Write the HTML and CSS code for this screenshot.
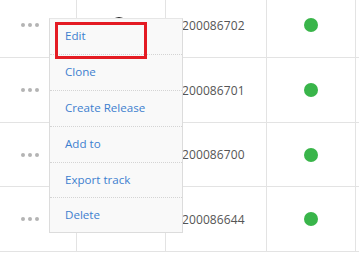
FILE: index.html
```html
<!DOCTYPE html>
<html>
<head>
<meta charset="utf-8">
<link rel="stylesheet" href="styles.css">
</head>
<body>
<div class="page">
  <div class="table">
    <div class="row">
      <div class="cell c-act"><span class="dots"><i></i><i></i><i></i></span></div>
      <div class="cell c-img"><span class="avatar"></span></div>
      <div class="cell c-num">200086702</div>
      <div class="cell c-stat"><span class="dot"></span></div>
      <div class="cell c-rest"></div>
    </div>
    <div class="row">
      <div class="cell c-act"><span class="dots"><i></i><i></i><i></i></span></div>
      <div class="cell c-img"></div>
      <div class="cell c-num">200086701</div>
      <div class="cell c-stat"><span class="dot"></span></div>
      <div class="cell c-rest"></div>
    </div>
    <div class="row">
      <div class="cell c-act"><span class="dots"><i></i><i></i><i></i></span></div>
      <div class="cell c-img"></div>
      <div class="cell c-num">200086700</div>
      <div class="cell c-stat"><span class="dot"></span></div>
      <div class="cell c-rest"></div>
    </div>
    <div class="row">
      <div class="cell c-act"><span class="dots"><i></i><i></i><i></i></span></div>
      <div class="cell c-img"></div>
      <div class="cell c-num">200086644</div>
      <div class="cell c-stat"><span class="dot"></span></div>
      <div class="cell c-rest"></div>
    </div>
  </div>
  <ul class="menu">
    <li class="item highlighted">Edit</li>
    <li class="item">Clone</li>
    <li class="item">Create Release</li>
    <li class="item">Add to</li>
    <li class="item">Export track</li>
    <li class="item">Delete</li>
  </ul>
</div>
</body>
</html>
```
FILE: styles.css
```css
*, *::before, *::after { box-sizing: border-box; }
html, body { margin: 0; padding: 0; background: #fff; overflow: hidden; }
body { width: 359px; height: 254px; font-family: "Open Sans", "Noto Sans", sans-serif; }
.page { position: relative; width: 359px; height: 254px; overflow: hidden; }
.table { margin-top: -7px; display: flex; flex-direction: column; }
.row {
  display: grid;
  grid-template-columns: 77px 89px 101px 89px 1fr;
  border-bottom: 1px solid #e3e3e3;
  height: 65px;
}
.row:nth-child(3) { height: 64px; }
.cell { display: flex; align-items: center; border-right: 1px solid #e3e3e3; }
.cell.c-rest { border-right: none; }
.c-act { justify-content: flex-end; padding-right: 37px; }
.dots { display: flex; gap: 3px; }
.dots i { display: block; width: 4px; height: 4px; border-radius: 50%; background: #b4b4b4; }
.c-img { justify-content: center; }
.avatar { width: 18px; height: 18px; border-radius: 50%; background: #222; margin-left: -4px; margin-top: 2px; }
.c-num { padding-left: 16px; font-size: 12px; color: #555; letter-spacing: 0.1px; }
.c-stat { justify-content: center; }
.dot { width: 14px; height: 14px; border-radius: 50%; background: #39b54a; }
.menu {
  position: absolute;
  left: 49px; top: 18px;
  width: 134px; height: 215px;
  margin: 0; padding: 0; list-style: none;
  background: #f9f9f9;
  border: 1px solid #dcdcdc;
  border-top-color: #e6e6e6;
}
.item {
  height: 36px;
  display: flex; align-items: center;
  padding-left: 15px;
  padding-bottom: 2px;
  font-size: 11.6px;
  color: #3d7fcf;
  border-bottom: 1px dotted #d4d4d4;
}
.item:last-child { border-bottom: none; height: 35px; }
.item:nth-child(5) { height: 35px; }
.highlighted { position: relative; }
.highlighted::after {
  content: "";
  position: absolute;
  left: 5px; top: 3px;
  width: 92px; height: 37px;
  border: 3px solid #e41b23;
}
```
